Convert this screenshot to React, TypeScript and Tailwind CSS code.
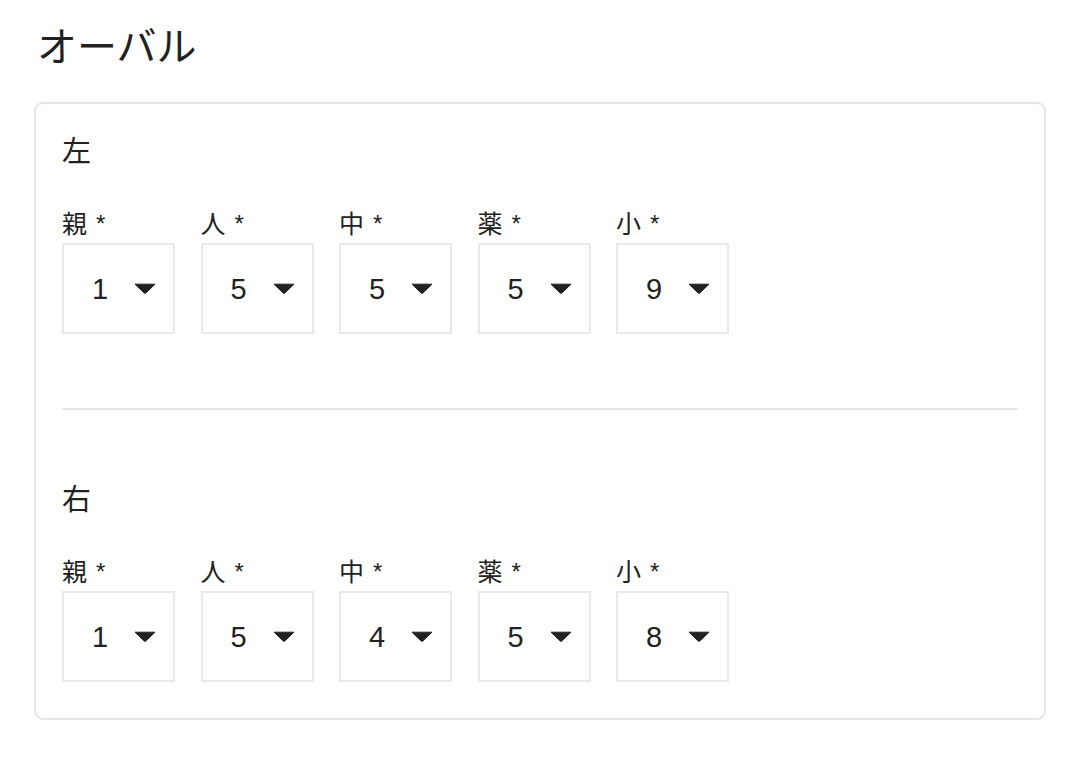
const sides = [
  { name: "左", values: ["1", "5", "5", "5", "9"] },
  { name: "右", values: ["1", "5", "4", "5", "8"] },
];

const labels = ["親", "人", "中", "薬", "小"];

function Caret() {
  return (
    <svg width="22" height="11" viewBox="0 0 22 11" className="shrink-0">
      <path d="M1 1.2 L21 1.2 L11.8 10 Q11 10.7 10.2 10 Z" fill="#222" stroke="#222" strokeWidth="1" strokeLinejoin="round" />
    </svg>
  );
}

function SelectBox({ label, value }: { label: string; value: string }) {
  return (
    <div className="flex flex-col gap-[5px]">
      <div className="text-[25px] leading-[28px] text-[#222] flex items-start">
        <span>{label}</span>
        <span className="ml-[9px] text-[24px]">*</span>
      </div>
      <div className="w-[113px] h-[91px] border-2 border-[#e9e9e9] flex items-center pl-[28px] pr-[17px]">
        <span className="text-[29px] leading-none text-[#222] pt-[2px]">{value}</span>
        <span className="ml-auto">
          <Caret />
        </span>
      </div>
    </div>
  );
}

function Side({ name, values }: { name: string; values: string[] }) {
  return (
    <section className="flex flex-col gap-[40px]">
      <h3 className="text-[29px] leading-[36px] text-[#222]">{name}</h3>
      <div className="flex gap-[25.5px]">
        {values.map((v, i) => (
          <SelectBox key={i} label={labels[i]} value={v} />
        ))}
      </div>
    </section>
  );
}

export default function App() {
  return (
    <main
      className="w-[1080px] h-[765px] bg-white pt-[23px] pl-[34px]"
      style={{ fontFamily: '"Liberation Sans", "Noto Sans CJK JP", sans-serif' }}
    >
      <h1 className="text-[40px] leading-[48px] text-[#222] pl-[3px]">オーバル</h1>
      <div className="mt-[31px] w-[1012px] border-2 border-[#e6e6e6] rounded-[9px] pt-[30px] pb-[36px] px-[26px]">
        <Side name={sides[0].name} values={sides[0].values} />
        <div className="h-[2px] bg-[#e6e6e6] mt-[74px] mb-[72px]" />
        <Side name={sides[1].name} values={sides[1].values} />
      </div>
    </main>
  );
}
